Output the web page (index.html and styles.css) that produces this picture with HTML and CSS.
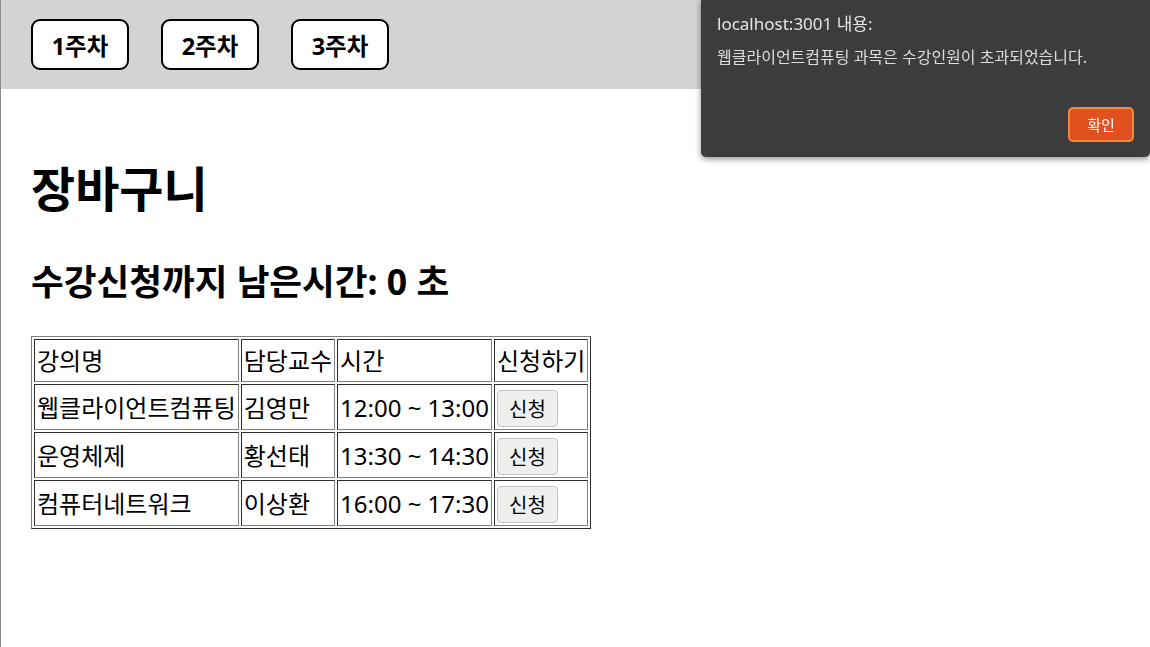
FILE: index.html
```html
<!DOCTYPE html>
<html lang="ko">
<head>
  <meta charset="UTF-8" />
  <title>장바구니</title>
  <link rel="stylesheet" href="styles.css">
</head>
<body>

  <!-- Week Tabs -->
  <div class="header">
    <button class="week-btn">1주차</button>
    <button class="week-btn">2주차</button>
    <button class="week-btn">3주차</button>
  </div>

  <!-- Cart -->
  <div class="container">
    <h1>장바구니</h1>
    <h2>수강신청까지 남은시간: 0 초</h2>

    <table class="cart" border="1">
      <tr>
        <td>강의명</td>
        <td>담당교수</td>
        <td>시간</td>
        <td>신청하기</td>
      </tr>
      <tr>
        <td>웹클라이언트컴퓨팅</td>
        <td>김영만</td>
        <td>12:00 ~ 13:00</td>
        <td><button class="apply-btn">신청</button></td>
      </tr>
      <tr>
        <td>운영체제</td>
        <td>황선태</td>
        <td>13:30 ~ 14:30</td>
        <td><button class="apply-btn">신청</button></td>
      </tr>
      <tr>
        <td>컴퓨터네트워크</td>
        <td>이상환</td>
        <td>16:00 ~ 17:30</td>
        <td><button class="apply-btn">신청</button></td>
      </tr>
    </table>
  </div>

  <!-- Alert Dialog -->
  <div class="alert">
    <div class="alert-title">localhost:3001 내용:</div>
    <div class="alert-msg">웹클라이언트컴퓨팅 과목은 수강인원이 초과되었습니다.</div>
    <div class="alert-actions">
      <button class="alert-ok">확인</button>
    </div>
  </div>

</body>
</html>
```

FILE: styles.css
```css
html, body {
  margin: 0;
  padding: 0;
  height: 100%;
}

body {
  font-family: "Noto Sans", "Noto Sans CJK KR", sans-serif;
  font-size: 24px;
  color: #000;
  background-color: #fff;
  border-left: 1px solid #8a8a8a;
  box-sizing: border-box;
}

.header {
  display: flex;
  gap: 32px;
  padding: 19px 30px;
  background-color: #d3d3d3;
}

.week-btn {
  font-family: "Noto Sans", "Noto Sans CJK KR", sans-serif;
  font-size: 23.5px;
  font-weight: bold;
  width: 98px;
  height: 51px;
  padding: 0;
  background-color: #fff;
  border: 2px solid #000;
  border-radius: 9px;
  color: #000;
}

.container {
  padding: 67px 30px 0;
}

h1 {
  margin: 0;
  font-size: 48px;
  line-height: 65px;
}

h2 {
  margin: 36px 0 30px;
  font-size: 35.6px;
  line-height: 49px;
}

.cart {
  border: 1px outset grey;
  border-spacing: 2px;
}

.cart td {
  border: 1px inset grey;
  padding: 2px;
  line-height: 37px;
}

.apply-btn {
  font-family: "Noto Sans", "Noto Sans CJK KR", sans-serif;
  font-size: 20px;
  width: 61px;
  height: 37px;
  margin: 0;
  padding: 0;
  background-color: #efefef;
  border: 1px solid #c4c4c4;
  border-radius: 4px;
  color: #000;
  vertical-align: middle;
}

/* Browser alert */
.alert {
  position: fixed;
  top: 0;
  right: 0;
  width: 449px;
  height: 157px;
  box-sizing: border-box;
  padding: 12px 16px 0;
  background-color: #3c3c3c;
  border-radius: 0 0 5px 5px;
  box-shadow: 0 2px 6px rgba(0, 0, 0, 0.45);
  color: #e6e6e6;
}

.alert-title {
  font-size: 17px;
  line-height: 24px;
}

.alert-msg {
  margin-top: 10px;
  font-size: 16px;
  line-height: 22px;
  color: #dcdcdc;
}

.alert-actions {
  display: flex;
  justify-content: flex-end;
  margin-top: 39px;
}

.alert-ok {
  font-family: "Noto Sans", "Noto Sans CJK KR", sans-serif;
  font-size: 15px;
  width: 66px;
  height: 35px;
  background-color: #e2501f;
  border: 2px solid #f5883a;
  border-radius: 5px;
  color: #fff;
}
```
